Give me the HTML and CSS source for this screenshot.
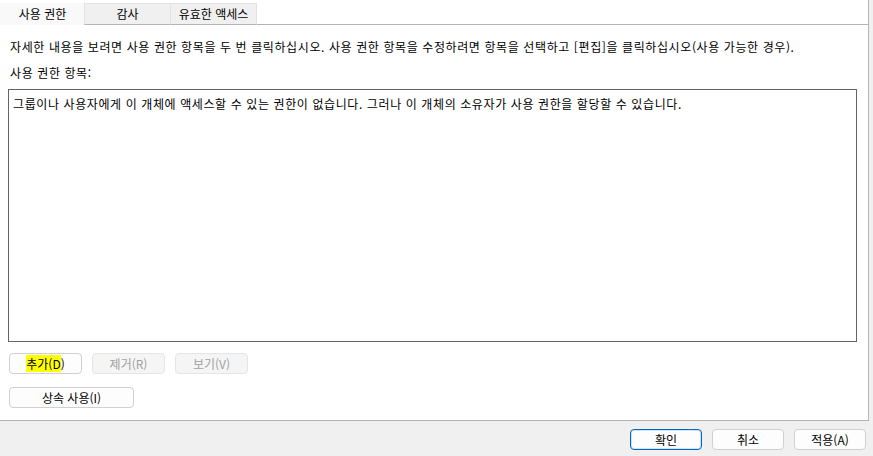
FILE: index.html
```html
<!DOCTYPE html>
<html lang="ko">
<head>
  <meta charset="UTF-8">
  <title>사용 권한</title>
  <link rel="stylesheet" href="styles.css">
</head>
<body>
  <div class="sheet">
    <div class="tabs">
      <div class="tab active">사용 권한</div>
      <div class="tab">감사</div>
      <div class="tab">유효한 액세스</div>
      <div class="tab-fill"></div>
    </div>

    <div class="page">
      <p class="hint">자세한 내용을 보려면 사용 권한 항목을 두 번 클릭하십시오. 사용 권한 항목을 수정하려면 항목을 선택하고 [편집]을 클릭하십시오(사용 가능한 경우).</p>
      <p class="label">사용 권한 항목:</p>

      <div class="entries">
        그룹이나 사용자에게 이 개체에 액세스할 수 있는 권한이 없습니다. 그러나 이 개체의 소유자가 사용 권한을 할당할 수 있습니다.
      </div>

      <div class="btn-row">
        <button class="btn"><span class="mark">추가(D</span>)</button>
        <button class="btn" disabled>제거(R)</button>
        <button class="btn" disabled>보기(V)</button>
      </div>
      <div class="btn-row">
        <button class="btn wide">상속 사용(I)</button>
      </div>
    </div>
  </div>

  <div class="footer">
    <button class="btn default">확인</button>
    <button class="btn">취소</button>
    <button class="btn">적용(A)</button>
  </div>
</body>
</html>
```

FILE: styles.css
```css
* {
  margin: 0;
  padding: 0;
  box-sizing: border-box;
  font-family: "Noto Sans CJK KR", "Noto Sans", sans-serif;
}

body {
  width: 873px;
  height: 456px;
  background: #f0f0f0;
  color: #000;
  font-size: 12px;
  overflow: hidden;
}

.sheet {
  width: 869px;
  height: 421px;
  background: #fff;
  border-right: 1px solid #b4b4b4;
  border-bottom: 1px solid #b4b4b4;
  display: flex;
  flex-direction: column;
}

/* tab strip */
.tabs {
  display: flex;
  align-items: flex-end;
  height: 25px;
}

.tab {
  height: 22px;
  line-height: 20px;
  text-align: center;
  background: #f0f0f0;
  border: 1px solid #e3e3e3;
  border-bottom: 1px solid #b4b4b4;
  width: 87px;
  margin-left: -1px;
  font-size: 12px;
}

.tab.active {
  background: #f9f9f9;
  border-color: #f9f9f9;
  border-bottom-color: #f9f9f9;
  width: 85px;
  margin-left: 0;
}

.tab:last-of-type {
  width: 89px;
}

.tab-fill {
  flex: 1;
  border-bottom: 1px solid #b4b4b4;
}

/* page body */
.page {
  flex: 1;
  padding: 14px 11px 0 8px;
}

.hint,
.label {
  line-height: 16px;
  padding-left: 2px;
  letter-spacing: 0.6px;
}

.label {
  margin-top: 10px;
}

.entries {
  margin-top: 8px;
  height: 253px;
  border: 1px solid #646464;
  padding: 6px 4px;
  line-height: 16px;
  letter-spacing: 0.6px;
}

.btn-row {
  display: flex;
  gap: 10px;
  margin-top: 11px;
  padding-left: 1px;
}

.btn-row + .btn-row {
  margin-top: 13px;
}

.btn {
  width: 73px;
  height: 21px;
  background: #fdfdfd;
  border: 1px solid #d0d0d0;
  border-radius: 4px;
  font-size: 12px;
  color: #000;
  line-height: 18px;
}

.btn:disabled {
  background: #f5f5f5;
  border-color: #e5e5e5;
  color: #a0a0a0;
}

.btn.wide {
  width: 125px;
}

.mark {
  background: #ffff00;
}

/* dialog buttons */
.footer {
  display: flex;
  justify-content: flex-end;
  gap: 10px;
  padding: 8px 7px 0 0;
}

.footer .btn {
  width: 72px;
}

.btn.default {
  border: 1px solid #0067c0;
  box-shadow: inset 0 0 0 1px #cce4f7;
}
```
